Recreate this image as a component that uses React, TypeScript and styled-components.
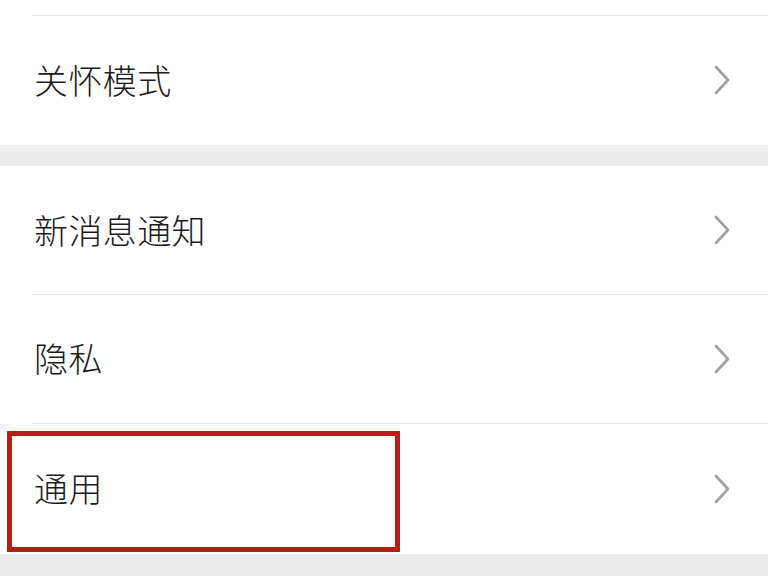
import { FC } from 'react'
import styled, { createGlobalStyle } from 'styled-components'

const GlobalStyle = createGlobalStyle`
	html, body {
		margin: 0;
		padding: 0;
		background: #ededed;
	}
	body {
		font-family: 'Noto Sans CJK SC', 'Noto Sans', sans-serif;
		overflow: hidden;
	}
`

const Page = styled.div`
	width: 768px;
	height: 576px;
	display: flex;
	flex-direction: column;
	background: #ededed;
`

const Section = styled.div<{ $gap?: number }>`
	display: flex;
	flex-direction: column;
	background: #ffffff;
	margin-top: ${({ $gap }) => $gap ?? 0}px;
`

const Stub = styled.div`
	height: 15px;
`

const Row = styled.div<{ $divider?: boolean; $height?: number }>`
	position: relative;
	display: flex;
	align-items: center;
	justify-content: space-between;
	height: ${({ $height }) => $height ?? 129}px;
	padding: 0 38px 0 34px;
	box-sizing: border-box;

	&::before {
		content: '';
		display: ${({ $divider }) => ($divider ? 'block' : 'none')};
		position: absolute;
		top: 0;
		left: 32px;
		right: 0;
		height: 1px;
		background: #e3e3e3;
	}
`

const Label = styled.span`
	font-size: 34px;
	font-weight: 300;
	color: #1b1b1b;
	letter-spacing: 0.4px;
	line-height: 1;
	margin-top: -1px;
`

const Highlight = styled.div`
	position: absolute;
	left: 7px;
	top: 8px;
	width: 393px;
	height: 121px;
	border: 5px solid #b71f14;
	box-sizing: border-box;
	pointer-events: none;
`

const Chevron: FC = () => (
	<svg width="16" height="30" viewBox="0 0 16 30" fill="none">
		<polyline
			points="2,2 14,15 2,28"
			stroke="#a0a0a0"
			strokeWidth="2.6"
			strokeLinecap="round"
			strokeLinejoin="round"
		/>
	</svg>
)

interface Item {
	label: string
	marked?: boolean
	height?: number
}

const groups: Item[][] = [
	[{ label: '关怀模式', height: 130 }],
	[{ label: '新消息通知', height: 128 }, { label: '隐私', height: 129 }, { label: '通用', marked: true, height: 131 }],
]

export default function App() {
	return (
		<>
			<GlobalStyle />
			<Page>
				<Section>
					<Stub />
					{groups[0].map(item => (
						<Row key={item.label} $divider $height={item.height}>
							<Label>{item.label}</Label>
							<Chevron />
						</Row>
					))}
				</Section>
				<Section $gap={21}>
					{groups[1].map((item, i) => (
						<Row key={item.label} $divider={i > 0} $height={item.height}>
							<Label>{item.label}</Label>
							<Chevron />
							{item.marked && <Highlight />}
						</Row>
					))}
				</Section>
			</Page>
		</>
	)
}
